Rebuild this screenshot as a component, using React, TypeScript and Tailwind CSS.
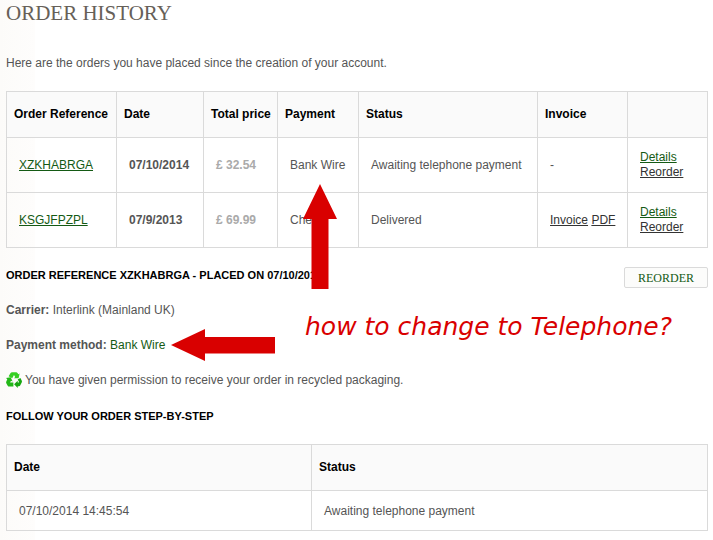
const orders = [
  { reference: 'XZKHABRGA', date: '07/10/2014', total: '£ 32.54', payment: 'Bank Wire', status: 'Awaiting telephone payment', invoice: false },
  { reference: 'KSGJFPZPL', date: '07/9/2013', total: '£ 69.99', payment: 'Check', status: 'Delivered', invoice: true }
]

const steps = [{ date: '07/10/2014 14:45:54', status: 'Awaiting telephone payment' }]

const headCell = 'border border-[#dadada] px-[7px] pb-0.5 text-left font-bold whitespace-nowrap text-black'
const cell = 'border border-[#dadada] px-3'
const greenLink = 'text-[#145a14] underline'
const darkLink = 'text-[#333] underline'

function RecycleIcon() {
  return (
    <svg className="h-4 w-4 shrink-0" viewBox="0 0 16 16" aria-hidden="true">
      {/* top arrow */}
      <path d="M2.600 4.200 4.600 1Q5.200.2 6 .2H10.200Q11 .2 11.500 1L12.300 2.300 13.600 1.600 12.600 6.200H8L9.200 4.900 8 3 6.200 6.300Z" fill="#35cf22" />
      {/* right arrow */}
      <path d="M11.700 7.400 14.400 5.900 15.700 8.600Q16.200 9.600 15.700 10.500L14.300 13.300Q13.900 14.200 12.900 14.200H11.700V16L8.100 12.300 11.700 8.800V10.500H12.600L13.100 10Z" fill="#18a711" />
      {/* left arrow */}
      <path d="M0 6 4.700 5.200 6.600 9.500 5 8.800 4.100 10.500H7.400V14.600H3.200Q2.200 14.600 1.700 13.700L.300 11.200Q-.1 10.300.300 9.400L1.300 7.200Z" fill="#23b818" />
    </svg>
  )
}

export default function App() {
  return (
    <main className="relative min-h-screen bg-[linear-gradient(to_right,#fcfbf9,#fefdfc_35px,#ffffff_35px)] pr-[5px] pb-2 pl-[6px] font-['Liberation_Sans',Arial,sans-serif] text-[12px] leading-4 text-[#555]">
      <h1 className="font-['Liberation_Serif',serif] text-[21px] leading-[26px] text-[#666058]">ORDER HISTORY</h1>
      <p className="mt-[29px] mb-5">Here are the orders you have placed since the creation of your account.</p>

      <div className="relative">
        <table className="w-full table-fixed border-collapse">
          <colgroup>
            <col className="w-[110px]" />
            <col className="w-[87px]" />
            <col className="w-[74px]" />
            <col className="w-[81px]" />
            <col />
            <col className="w-[90px]" />
            <col className="w-[80px]" />
          </colgroup>
          <thead>
            <tr className="h-[46px] bg-[#fafafa]">
              <th className={headCell}>Order Reference</th>
              <th className={headCell}>Date</th>
              <th className={headCell}>Total price</th>
              <th className={headCell}>Payment</th>
              <th className={headCell}>Status</th>
              <th className={headCell}>Invoice</th>
              <th className={headCell}></th>
            </tr>
          </thead>
          <tbody>
            {orders.map(order => (
              <tr key={order.reference} className="h-[55px]">
                <td className={cell}>
                  <a href="#order" className={greenLink}>{order.reference}</a>
                </td>
                <td className={`${cell} font-bold`}>{order.date}</td>
                <td className={`${cell} font-bold text-[#aaa]`}>{order.total}</td>
                <td className={cell}>{order.payment}</td>
                <td className={cell}>{order.status}</td>
                <td className={`${cell} whitespace-nowrap`}>
                  {order.invoice ? (
                    <>
                      <a href="#invoice" className={darkLink}>Invoice</a>{' '}
                      <a href="#pdf" className={darkLink}>PDF</a>
                    </>
                  ) : '-'}
                </td>
                <td className={`${cell} leading-[15px]`}>
                  <a href="#order" className={greenLink}>Details</a>
                  <br />
                  <a href="#reorder" className={darkLink}>Reorder</a>
                </td>
              </tr>
            ))}
          </tbody>
        </table>

        {/* Arrow up to the payment column */}
        <svg className="absolute top-[93px] left-[297px] h-[105px] w-[34px]" viewBox="0 0 34 105" aria-hidden="true">
          <path d="M17 0 34 35H25.500V105H8.500V35H0Z" fill="#d90000" />
        </svg>
      </div>

      <div className="mt-[19px] flex items-start justify-between">
        <h2 className="text-[11px] font-bold text-black">ORDER REFERENCE XZKHABRGA - PLACED ON 07/10/2014</h2>
        <button className="h-[21px] w-[84px] rounded-[2px] border border-[#dadada] bg-[#fcfcfb] font-['Liberation_Serif',serif] text-[12px] leading-4 text-[#145a14]">
          REORDER
        </button>
      </div>

      <p className="mt-[14px]"><strong>Carrier:</strong> Interlink (Mainland UK)</p>
      <div className="relative mt-[19px]">
        <p><strong>Payment method:</strong> <span className="text-[#145a14]">Bank Wire</span></p>
        <svg className="absolute -top-2 left-[165px] h-8 w-[104px]" viewBox="0 0 104 32" aria-hidden="true">
          <path d="M0 16 34 0V8H104V24.500H34V32Z" fill="#d90000" />
        </svg>
        <p className="absolute -top-[26px] left-[299px] font-['DejaVu_Sans',sans-serif] text-[25px] leading-8 whitespace-nowrap text-[#d90000] italic">
          how to change to Telephone?
        </p>
      </div>
      <p className="mt-[19px] flex gap-[3px]">
        <RecycleIcon />
        You have given permission to receive your order in recycled packaging.
      </p>

      <h2 className="my-5 text-[11px] font-bold text-black">FOLLOW YOUR ORDER STEP-BY-STEP</h2>
      <table className="w-full table-fixed border-collapse">
        <colgroup>
          <col className="w-[305px]" />
          <col />
        </colgroup>
        <thead>
          <tr className="h-[46px] bg-[#fafafa]">
            <th className={headCell}>Date</th>
            <th className={headCell}>Status</th>
          </tr>
        </thead>
        <tbody>
          {steps.map(step => (
            <tr key={step.date} className="h-10">
              <td className={cell}>{step.date}</td>
              <td className={cell}>{step.status}</td>
            </tr>
          ))}
        </tbody>
      </table>
    </main>
  )
}
